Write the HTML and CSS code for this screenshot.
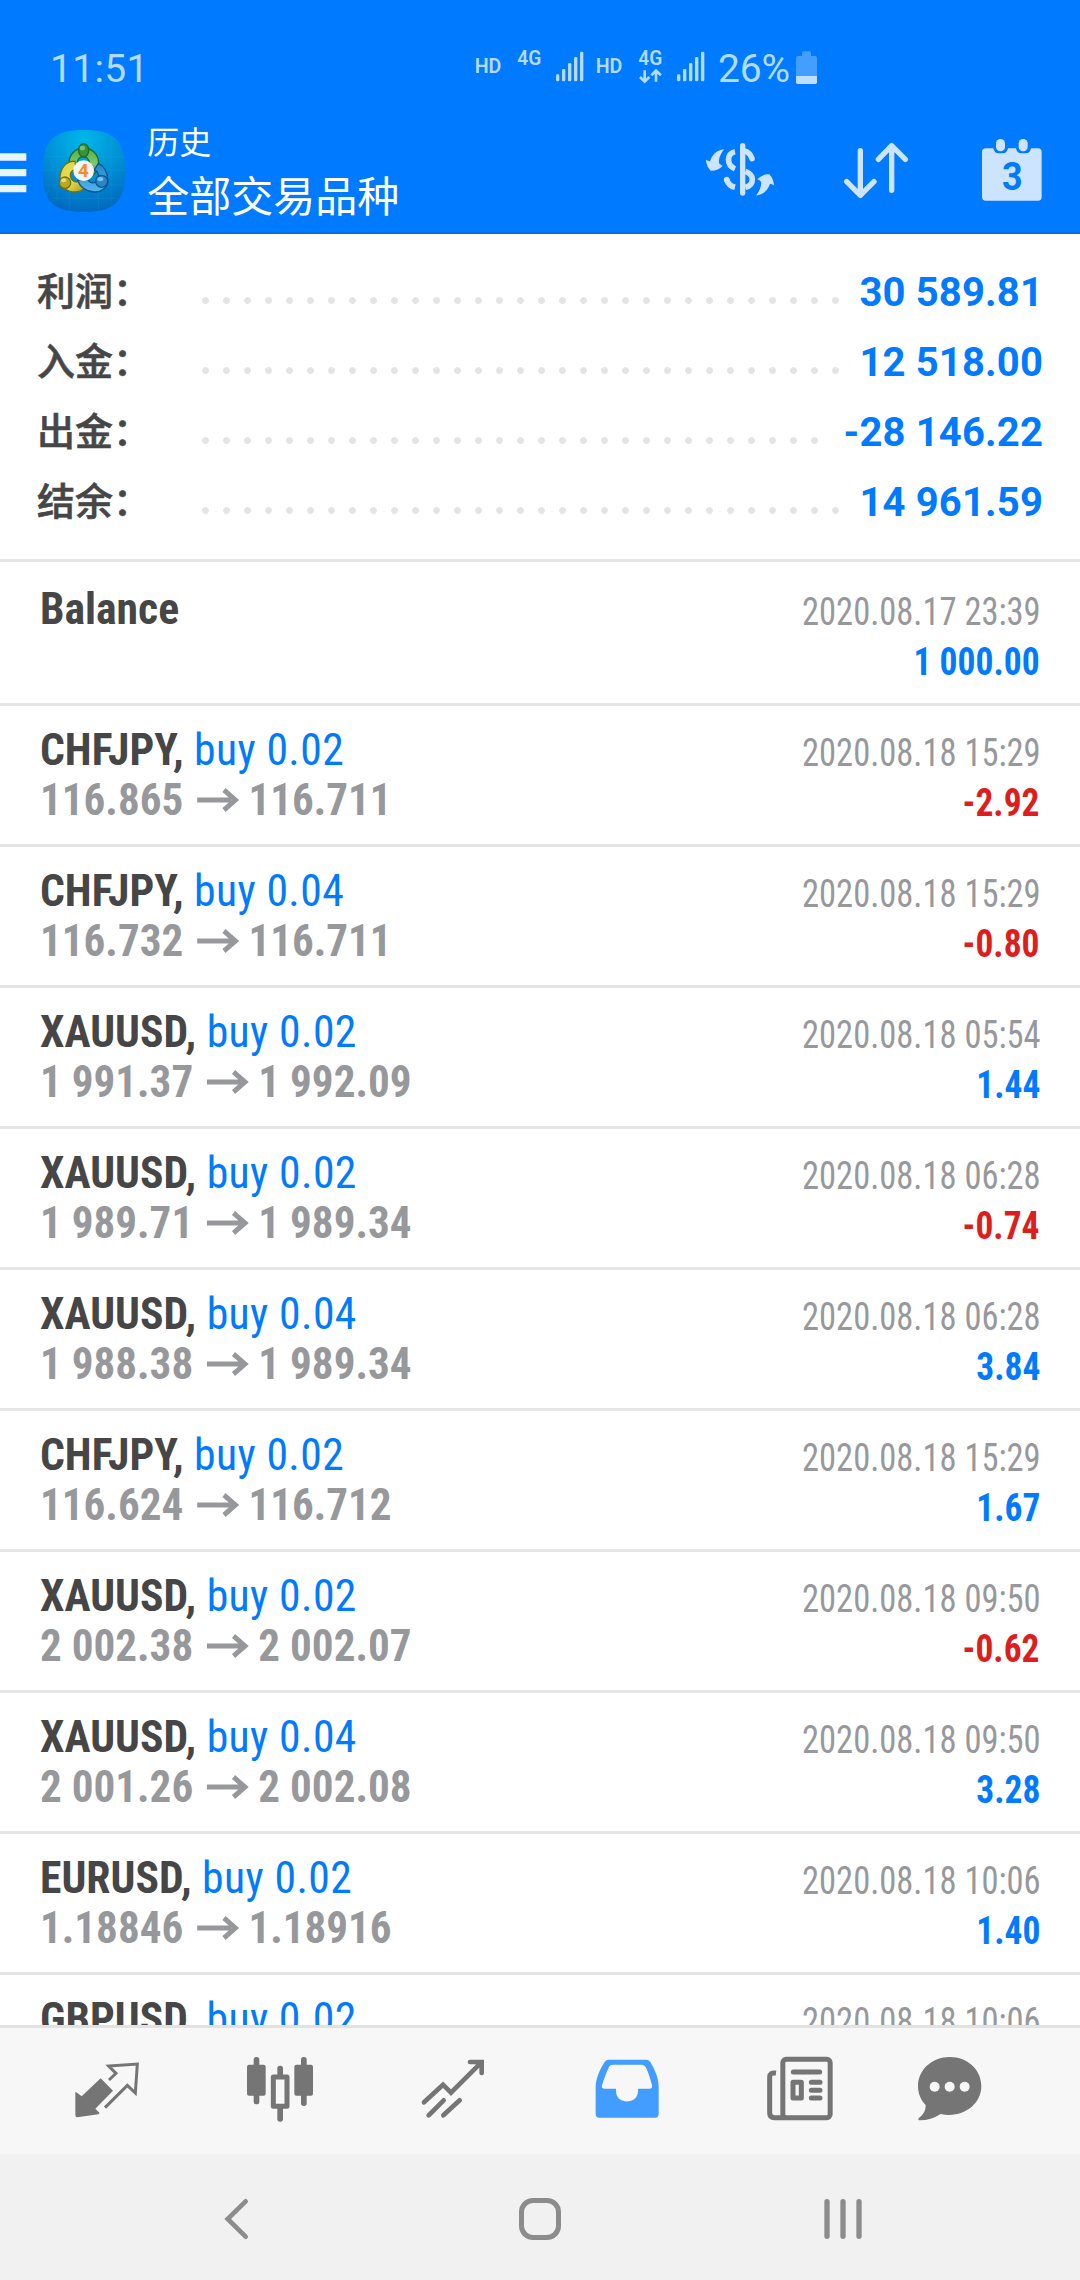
FILE: index.html
```html
<!DOCTYPE html>
<html lang="zh-CN">
<head>
<meta charset="utf-8">
<title>历史</title>
<link rel="stylesheet" href="styles.css">
</head>
<body>
<header class="header">
  <div class="status">
    <span class="clock">11:51</span>
    <svg class="signals" viewBox="105 66 690 144" width="230" height="48">
      <g class="signal-text">
        <text x="104" y="159" textLength="80" lengthAdjust="spacingAndGlyphs">HD</text>
        <text x="232" y="134" textLength="72" lengthAdjust="spacingAndGlyphs">4G</text>
        <text x="467" y="159" textLength="80" lengthAdjust="spacingAndGlyphs">HD</text>
        <text x="595" y="134" textLength="72" lengthAdjust="spacingAndGlyphs">4G</text>
      </g>
      <g id="bars" fill="#b3daff">
        <rect x="348" y="163" width="10" height="21" rx="4"/><rect x="366" y="147" width="10" height="37" rx="4"/><rect x="384" y="129" width="10" height="55" rx="4"/><rect x="402" y="111" width="10" height="73" rx="4"/><rect x="420" y="95" width="10" height="89" rx="4"/>
      </g>
      <use href="#bars" x="363"/>
      <path d="M614 151V184M600 171L614 185L628 171M648 185V152M634 166L648 152L663 166" fill="none" stroke="#b3daff" stroke-width="8"/>
    </svg>
    <span class="percent">26%</span>
    <svg class="battery" viewBox="1068 90 63 99" width="21" height="33">
      <path d="M1086 105V96Q1086 91 1091 91H1108Q1113 91 1113 96V105H1126Q1131 105 1131 110V165H1068V110Q1068 105 1073 105Z" fill="#429eff"/>
      <path d="M1068 165H1131V184Q1131 189 1126 189H1073Q1068 189 1068 184Z" fill="#bfddff"/>
    </svg>
  </div>
  <div class="appbar">
    <svg class="menu" viewBox="0 354 80 192" width="26.67" height="64"><path d="M0 400H79V422H0ZM0 447H79V469H0ZM0 495H79V517H0Z" fill="#eaf4ff"/></svg>
    <svg class="logo" viewBox="127 324 252 258" width="84" height="86">
      <defs>
        <radialGradient id="sky" cx=".5" cy=".12" r=".95"><stop offset="0" stop-color="#00b7ea"/><stop offset=".5" stop-color="#0090d6"/><stop offset="1" stop-color="#0063bb"/></radialGradient>
        <linearGradient id="green" x2="0" y2="1"><stop offset="0" stop-color="#4fae4a"/><stop offset=".6" stop-color="#7ccb6d"/><stop offset="1" stop-color="#2b8536"/></linearGradient>
        <linearGradient id="yellow" x2="1" y2="1"><stop offset="0" stop-color="#d9cf3a"/><stop offset=".5" stop-color="#e8e15d"/><stop offset="1" stop-color="#a69413"/></linearGradient>
        <linearGradient id="blue" x2="0" y2="1"><stop offset="0" stop-color="#2486c8"/><stop offset="1" stop-color="#52b6ee"/></linearGradient>
      </defs>
      <path d="M253 330C345 330 376 361 376 453S345 576 253 576S129 545 129 453S161 330 253 330Z" fill="url(#sky)"/>
      <path d="M172 360V546M210 334V572M296 334V572M334 350V556M134 410H372M130 450H376M134 495H372M150 535H356" stroke="#35b4e6" stroke-width="2" opacity=".22"/>
      <g stroke-width="4">
        <path d="M208 430C208 402 228 384 252 384S297 402 297 430C297 445 290 456 282 464L266 448C276 434 268 412 252 410C238 410 232 422 232 436Z" fill="url(#green)" stroke="#1f6b2c"/>
        <path d="M226 424C198 422 180 446 181 480C184 504 204 516 228 516C244 514 254 508 260 498L236 484C226 488 212 480 212 466C212 454 220 448 230 450Z" fill="url(#yellow)" stroke="#74700f"/>
        <path d="M296 430C314 438 324 460 325 484C322 504 306 516 284 516C262 514 242 502 234 482L262 472C264 486 280 494 292 484C302 472 296 454 284 450Z" fill="url(#blue)" stroke="#0c558f"/>
        <ellipse cx="252" cy="391" rx="15" ry="20" fill="#3a9238" stroke="#1f6b2c"/>
        <circle cx="196" cy="488" r="17" fill="#bba91f" stroke="#74700f"/>
        <circle cx="306" cy="484" r="18" fill="#2a86c6" stroke="#0c558f"/>
      </g>
      <ellipse cx="248" cy="384" rx="8" ry="7" fill="#93d68a" opacity=".7"/>
      <ellipse cx="192" cy="481" rx="8" ry="6" fill="#f3eb90" opacity=".8"/>
      <ellipse cx="302" cy="477" rx="9" ry="6" fill="#a3dcff" opacity=".7"/>
      <circle cx="252" cy="452" r="31" fill="#f4f4f4"/>
      <text class="logo-digit" x="251" y="471" text-anchor="middle">4</text>
    </svg>
    <div class="titles"><div class="title-small">历史</div><div class="title-large">全部交易品种</div></div>
    <div class="actions">
      <svg viewBox="69 84 222 192" width="74" height="64">
        <g fill="none" stroke="#cce4ff" stroke-width="17">
          <path d="M165 125C139 130 139 166 165 177"/><path d="M196 124Q210 128 216 146" stroke-linecap="round"/>
          <path d="M140 209C144 220 152 229 165 232"/><path d="M196 184Q217 192 217 208Q217 228 196 232"/>
        </g>
        <circle cx="140" cy="209" r="8.5" fill="#cce4ff"/>
        <rect x="180" y="99" width="16" height="158" rx="8" fill="#cce4ff"/>
        <path id="swirl" d="M132 118C108 121 97 135 90 154C86 154 82 151 78 149Q79 168 92 182Q114 183 128 167Q122 166 117 160Q114 142 132 118Z" fill="#cce4ff"/>
        <use href="#swirl" transform="rotate(180 180 187.5)"/>
      </svg>
      <svg class="sort" viewBox="486 84 204 192" width="68" height="64"><path d="M541 122V256M500 215L541 256L582 215M635 241V107M595 148L635 107L676 148" fill="none" stroke="#cce4ff" stroke-width="16" stroke-linecap="round" stroke-linejoin="round"/></svg>
      <svg viewBox="900 84 192 192" width="64" height="64">
        <path d="M918 115H940Q943 130 955 130H969Q981 130 984 115H1008Q1011 130 1023 130H1037Q1051 130 1053 115H1074Q1085 115 1085 126V260Q1085 272 1074 272H918Q906 272 906 260V126Q906 115 918 115Z" fill="#cce4ff"/>
        <rect x="948" y="87" width="27" height="37" rx="13" fill="#cce4ff"/><rect x="1016" y="87" width="27" height="37" rx="13" fill="#cce4ff"/>
        <text class="calendar-day" x="966" y="239" textLength="62" lengthAdjust="spacingAndGlyphs">3</text>
      </svg>
    </div>
  </div>
</header>

<main class="content">
  <section class="summary">
    <div class="sum-row"><span class="sum-label">利润：</span><i class="dots"></i><b class="sum-value">30 589.81</b></div>
    <div class="sum-row"><span class="sum-label">入金：</span><i class="dots"></i><b class="sum-value">12 518.00</b></div>
    <div class="sum-row"><span class="sum-label">出金：</span><i class="dots dots-short"></i><b class="sum-value">-28 146.22</b></div>
    <div class="sum-row"><span class="sum-label">结余：</span><i class="dots"></i><b class="sum-value">14 961.59</b></div>
  </section>
  <section class="deals" id="deals">
    <article class="deal balance">
      <div class="line"><span class="name"><b>Balance</b></span><span class="date">2020.08.17 23:39</span></div>
      <div class="line"><span></span><b class="amount">1 000.00</b></div>
    </article>
  </section>
</main>

<nav class="tabs">
  <svg viewBox="35 265 216 210"><path d="M124 338L161 375L108 429L121 442L117 446L54 455Q48 455 48 449V380Q52 379 55 383L67 392Z" fill="#757575"/><path d="M149 343L170 323L148 301L234 295L228 382L204 359L137 426" fill="none" stroke="#757575" stroke-width="9"/></svg>
  <svg viewBox="552 265 216 210"><g fill="#757575"><rect x="561" y="297" width="56" height="93" rx="6"/><rect x="581" y="274" width="17" height="142" rx="8"/><rect x="703" y="297" width="56" height="93" rx="6"/><rect x="723" y="274" width="17" height="147" rx="8"/><rect x="652" y="300" width="17" height="40" rx="8"/><rect x="652" y="415" width="17" height="53" rx="8"/></g><rect x="640" y="334" width="41" height="88" fill="#f7f7f7" stroke="#757575" stroke-width="15" stroke-linejoin="round"/></svg>
  <svg viewBox="1072 265 216 210"><path d="M1093 410L1150 357L1174 381L1265 290M1231 289H1266V322M1107 449L1152 404M1151 449L1200 404" fill="none" stroke="#757575" stroke-width="14" stroke-linecap="round" stroke-linejoin="miter"/></svg>
  <svg viewBox="33 265 216 210"><path fill-rule="evenodd" d="M86 282H199Q206 282 211 289C226 315 236 338 236 364V444Q236 456 225 456H58Q47 456 47 444V364C47 338 60 311 74 289Q79 282 86 282ZM98 297Q90 297 87 304Q77 324 66 359Q64 369 72 369H108V376C108 418 174 418 174 376V369H210Q218 369 216 359Q207 324 197 304Q192 297 184 297Z" fill="#429dff"/></svg>
  <svg viewBox="557 265 216 210"><rect x="613.500" y="281" width="142" height="175" rx="10" fill="none" stroke="#757575" stroke-width="15"/><path d="M593 322Q574 320 574 334V442Q574 456 588 456H622" fill="none" stroke="#757575" stroke-width="15"/><path d="M645 319H724M699 350H725M699 374H725M699 397H725" stroke="#757575" stroke-width="15" stroke-linecap="round"/><rect x="644" y="350" width="25" height="47" fill="none" stroke="#757575" stroke-width="15" stroke-linejoin="round"/></svg>
  <svg viewBox="1006 265 216 210"><path d="M1113 274C1168 274 1208 313 1208 361C1208 418 1150 459 1086 445Q1055 465 1021 464Q1017 463 1020 458Q1042 442 1041 418C1026 403 1018 383 1018 361C1018 313 1060 274 1113 274Z" fill="#757575"/><g fill="#f7f7f7"><circle cx="1068" cy="363" r="15"/><circle cx="1113" cy="363" r="15"/><circle cx="1158" cy="363" r="15"/></g></svg>
</nav>
<footer class="navbar">
  <svg viewBox="492 696 80 132" width="26.67" height="44"><path d="M560 709L506 762L560 815" fill="none" stroke="#8c8c8c" stroke-width="14" stroke-linecap="round"/></svg>
  <svg viewBox="0 0 44 44" width="44" height="44"><rect x="3.500" y="3.500" width="37" height="37" rx="11.500" fill="none" stroke="#8c8c8c" stroke-width="5"/></svg>
  <svg viewBox="723 696 132 132" width="44" height="44"><path d="M741 710V814M789 710V814M837 710V814" stroke="#8c8c8c" stroke-width="16" stroke-linecap="round"/></svg>
</footer>
<script src="deals.js"></script>
</body>
</html>
```
FILE: styles.css
```css
* { box-sizing: border-box; }
body {
  margin: 0;
  width: 1080px;
  height: 2280px;
  display: flex;
  flex-direction: column;
  overflow: hidden;
  background: #fff;
  font-family: Roboto, "Noto Sans CJK SC", sans-serif;
}
svg { display: block; flex: none; }

.header { flex: none; height: 234px; background: #007aff; border-bottom: 2px solid #006fe8; }
.status { height: 108px; padding: 30px 0 0 50px; display: flex; align-items: center; color: #b3daff; font-size: 39px; }
.clock { width: 425px; letter-spacing: .3px; }
.signals { margin-bottom: 6px; }
.signal-text { font: 600 60px Roboto, sans-serif; fill: #b3daff; }
.percent { width: 79px; margin-left: 13px; letter-spacing: -.2px; }
.battery { margin: 0 0 4px -1px; }

.appbar { height: 124px; display: flex; align-items: center; }
.logo { margin: 2px 0 0 15.6px; }
.logo-digit { font: bold 56px Roboto, sans-serif; fill: #f28a2e; }
.titles { margin-left: 21px; color: #fff; font-family: "Noto Sans CJK SC", sans-serif; line-height: 54px; padding-bottom: 6px; }
.title-small { font-size: 32px; }
.title-large { font-size: 42px; }
.actions { margin-left: auto; padding-right: 36px; display: flex; gap: 67px; }
.sort { margin: 0 3px 0 -2px; }
.calendar-day { font: bold 115px Roboto, sans-serif; fill: #007aff; }

.content { flex: none; height: 1791px; overflow: hidden; }
.summary { height: 328px; padding: 22px 37px 0; border-bottom: 3px solid #e5e5e5; }
.sum-row { height: 70px; display: flex; align-items: center; justify-content: space-between; }
.sum-label { width: 158px; padding-bottom: 5px; white-space: nowrap; font: 500 38px "Noto Sans CJK SC", sans-serif; color: #464646; -webkit-text-stroke: .6px #464646; }
.dots { width: 651px; height: 21px; margin: 18px auto 0 0; background: radial-gradient(circle at 10.500px 10.500px, #e4e4e4 3px, transparent 3.800px) repeat-x; background-size: 21px 21px; }
.dots-short { width: 630px; }
.sum-value { font-size: 40px; letter-spacing: .15px; color: #007aff; padding-top: 2px; white-space: nowrap; }

.deal { height: 141px; padding: 20px 39px 0 40px; border-bottom: 3px solid #e5e5e5; font-family: "Roboto Condensed", Roboto, sans-serif; }
.balance { height: 144px; padding-top: 23px; }
.balance .amount { padding-top: 2px; }
.line { height: 50px; line-height: 50px; display: flex; align-items: baseline; justify-content: space-between; white-space: nowrap; }
.balance .line:last-child { align-items: flex-start; }
.name { font-size: 45px; letter-spacing: .4px; color: #007aff; transform: translateY(-1px) scaleX(.97); transform-origin: left; }
.name b { letter-spacing: 0; color: #464646; }
.price { display: flex; align-items: baseline; font-size: 45px; font-weight: bold; color: #97989c; transform: translateY(-1px) scaleX(.958); transform-origin: left; }
.price svg { margin: 0 10px 0 14px; align-self: center; }
.date { font-size: 39px; color: #97989c; transform: scaleX(.885); transform-origin: right; }
.amount { font-size: 39px; color: #007aff; transform: translateX(-1px) scaleX(.91); transform-origin: right; }
.loss { color: #dc1e1e; }

.tabs { flex: none; height: 129px; padding: 0 0 5px 20px; border-top: 3px solid #e2e2e2; background: #f7f7f7; display: grid; grid-template-columns: repeat(5, 173.400px) 126px; align-items: center; justify-items: center; }
.tabs svg { width: 72px; height: 70px; }
.navbar { flex: none; height: 126px; padding: 4px 0 0 85px; background: #f1f1f1; display: grid; grid-template-columns: repeat(3, 303px); align-items: center; justify-items: center; }
```
FILE: deals.js
```js
const deals = [
  ["CHFJPY", "0.02", "116.865", "116.711", "2020.08.18 15:29", "-2.92"],
  ["CHFJPY", "0.04", "116.732", "116.711", "2020.08.18 15:29", "-0.80"],
  ["XAUUSD", "0.02", "1 991.37", "1 992.09", "2020.08.18 05:54", "1.44"],
  ["XAUUSD", "0.02", "1 989.71", "1 989.34", "2020.08.18 06:28", "-0.74"],
  ["XAUUSD", "0.04", "1 988.38", "1 989.34", "2020.08.18 06:28", "3.84"],
  ["CHFJPY", "0.02", "116.624", "116.712", "2020.08.18 15:29", "1.67"],
  ["XAUUSD", "0.02", "2 002.38", "2 002.07", "2020.08.18 09:50", "-0.62"],
  ["XAUUSD", "0.04", "2 001.26", "2 002.08", "2020.08.18 09:50", "3.28"],
  ["EURUSD", "0.02", "1.18846", "1.18916", "2020.08.18 10:06", "1.40"],
  ["GBPUSD", "0.02", "", "", "2020.08.18 10:06", ""]
];
const arrow = '<svg width="44" height="24" viewBox="0 0 44 24"><path d="M0 12H41M28 2L40 12L28 22" fill="none" stroke="#97989c" stroke-width="5"/></svg>';
document.getElementById("deals").insertAdjacentHTML("beforeend", deals.map(([symbol, lots, open, close, date, profit]) => `
  <article class="deal">
    <div class="line"><span class="name"><b>${symbol},</b> buy ${lots}</span><span class="date">${date}</span></div>
    ${open && `<div class="line"><span class="price">${open}${arrow}${close}</span><b class="amount${profit[0] === "-" ? " loss" : ""}">${profit}</b></div>`}
  </article>`).join(""));
```
